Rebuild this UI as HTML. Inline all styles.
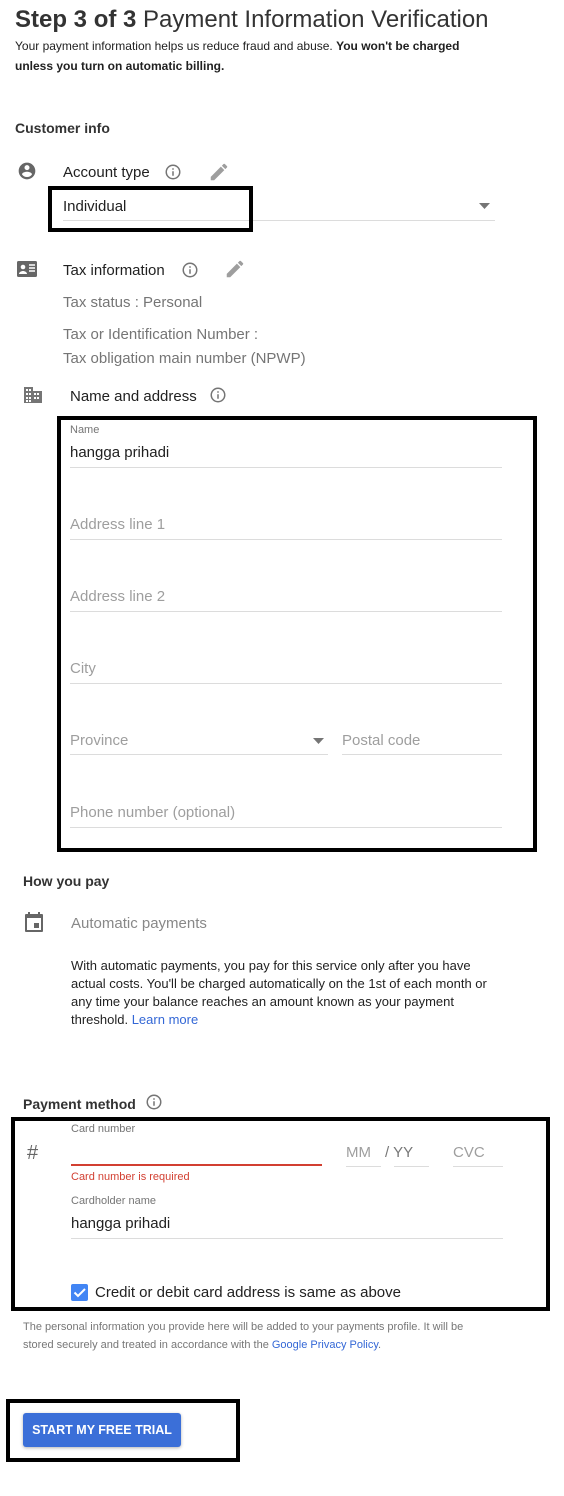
<!DOCTYPE html>
<html><head><meta charset="utf-8"><style>
*{margin:0;padding:0;box-sizing:border-box}
body{width:564px;height:1496px;background:#fff;position:relative;font-family:"Liberation Sans",Arial,sans-serif;color:#212121;overflow:hidden}
.t{position:absolute;white-space:nowrap;line-height:1}
.g{color:#757575}
.ln{position:absolute;height:1px;background:#dcdcdc}
.box{position:absolute;border:4px solid #000}
svg{position:absolute}
.lbl{font-size:15px;color:#9e9e9e}
</style></head><body>
<div class="t" style="left:15px;top:8px;font-size:24px;color:#333"><b style="font-weight:bold">Step 3 of 3</b> Payment Information Verification</div>
<div class="t" style="left:15px;top:40px;font-size:12px">Your payment information helps us reduce fraud and abuse. <b>You won't be charged</b></div>
<div class="t" style="left:15px;top:60px;font-size:12px;font-weight:bold">unless you turn on automatic billing.</div>
<div class="t" style="left:15px;top:121px;font-size:14px;font-weight:bold;color:#333">Customer info</div>

<svg style="left:17px;top:161px" width="20" height="20" viewBox="0 0 24 24"><path fill="#666" d="M12 2C6.5 2 2 6.5 2 12s4.5 10 10 10 10-4.5 10-10S17.5 2 12 2zm0 3a3 3 0 110 6 3 3 0 010-6zm0 14.2a7.2 7.2 0 01-6-3.2c0-2 4-3.1 6-3.1s6 1.1 6 3.1a7.2 7.2 0 01-6 3.2z"/></svg>
<div class="t" style="left:63px;top:165px;font-size:15px">Account type</div>
<svg style="left:164px;top:163px" width="18" height="18" viewBox="0 0 24 24"><circle cx="12" cy="12" r="9" fill="none" stroke="#757575" stroke-width="2"/><path d="M12 11v6M12 7v2" stroke="#757575" stroke-width="2"/></svg>
<svg style="left:208px;top:161px" width="22" height="22" viewBox="0 0 24 24"><path fill="#9e9e9e" d="M3 17.25V21h3.75L17.8 9.94l-3.75-3.75L3 17.25zM20.7 7.04a1 1 0 000-1.41l-2.34-2.34a1 1 0 00-1.41 0l-1.83 1.83 3.75 3.75 1.83-1.83z"/></svg>
<div class="t" style="left:63px;top:199px;font-size:15px">Individual</div>
<div class="ln" style="left:63px;top:220px;width:432px"></div>
<svg style="left:479px;top:202px" width="12" height="8"><path d="M0 1h11L5.5 7z" fill="#757575"/></svg>
<div class="box" style="left:48px;top:186px;width:205px;height:46px"></div>

<svg style="left:16px;top:259px" width="22" height="20" viewBox="0 0 22 20"><rect x="1" y="2" width="20" height="16" rx="1.5" fill="#666"/><circle cx="7" cy="8" r="2.3" fill="#fff"/><path d="M3 15c0-2 2.5-3 4-3s4 1 4 3z" fill="#fff"/><path d="M13 6h6M13 9h6M13 12h6" stroke="#fff" stroke-width="1.5"/></svg>
<div class="t" style="left:63px;top:263px;font-size:15px">Tax information</div>
<svg style="left:181px;top:261px" width="18" height="18" viewBox="0 0 24 24"><circle cx="12" cy="12" r="9" fill="none" stroke="#757575" stroke-width="2"/><path d="M12 11v6M12 7v2" stroke="#757575" stroke-width="2"/></svg>
<svg style="left:224px;top:258px" width="22" height="22" viewBox="0 0 24 24"><path fill="#9e9e9e" d="M3 17.25V21h3.75L17.8 9.94l-3.75-3.75L3 17.25zM20.7 7.04a1 1 0 000-1.41l-2.34-2.34a1 1 0 00-1.41 0l-1.83 1.83 3.75 3.75 1.83-1.83z"/></svg>
<div class="t g" style="left:63px;top:295px;font-size:15px">Tax status : Personal</div>
<div class="t g" style="left:63px;top:327px;font-size:15px">Tax or Identification Number :</div>
<div class="t g" style="left:63px;top:351px;font-size:15px">Tax obligation main number (NPWP)</div>

<svg style="left:23px;top:386px" width="20" height="18" viewBox="0 0 20 18"><path fill="#757575" d="M1 1h9v4h9v12H1z"/><g fill="#fff"><rect x="3" y="3" width="2" height="2"/><rect x="6" y="3" width="2" height="2"/><rect x="3" y="7" width="2" height="2"/><rect x="6" y="7" width="2" height="2"/><rect x="3" y="11" width="2" height="2"/><rect x="6" y="11" width="2" height="2"/><rect x="11" y="7" width="2" height="2"/><rect x="14" y="7" width="2" height="2"/><rect x="11" y="11" width="2" height="2"/><rect x="14" y="11" width="2" height="2"/><rect x="3" y="14" width="2" height="2"/><rect x="6" y="14" width="2" height="2"/></g></svg>
<div class="t" style="left:70px;top:389px;font-size:15px">Name and address</div>
<svg style="left:209px;top:386px" width="18" height="18" viewBox="0 0 24 24"><circle cx="12" cy="12" r="9" fill="none" stroke="#757575" stroke-width="2"/><path d="M12 11v6M12 7v2" stroke="#757575" stroke-width="2"/></svg>

<div class="box" style="left:57px;top:416px;width:480px;height:436px"></div>
<div class="t g" style="left:70px;top:425px;font-size:11px">Name</div>
<div class="t" style="left:70px;top:445px;font-size:15px">hangga prihadi</div>
<div class="ln" style="left:70px;top:467px;width:432px"></div>
<div class="t lbl" style="left:70px;top:517px">Address line 1</div>
<div class="ln" style="left:70px;top:539px;width:432px"></div>
<div class="t lbl" style="left:70px;top:589px">Address line 2</div>
<div class="ln" style="left:70px;top:611px;width:432px"></div>
<div class="t lbl" style="left:70px;top:661px">City</div>
<div class="ln" style="left:70px;top:683px;width:432px"></div>
<div class="t lbl" style="left:70px;top:733px">Province</div>
<svg style="left:313px;top:737px" width="12" height="8"><path d="M0 1h11L5.5 7z" fill="#757575"/></svg>
<div class="ln" style="left:70px;top:754px;width:258px"></div>
<div class="t lbl" style="left:342px;top:733px">Postal code</div>
<div class="ln" style="left:342px;top:754px;width:160px"></div>
<div class="t lbl" style="left:70px;top:805px">Phone number (optional)</div>
<div class="ln" style="left:70px;top:827px;width:432px"></div>

<div class="t" style="left:23px;top:874px;font-size:14px;font-weight:bold;color:#333">How you pay</div>
<svg style="left:24px;top:912px" width="20" height="20" viewBox="0 0 20 20"><path fill="#666" d="M4 0h2v2h8V0h2v2h2a1 1 0 011 1v16a1 1 0 01-1 1H2a1 1 0 01-1-1V3a1 1 0 011-1h2zM3 6v12h14V6z"/><rect x="10" y="11" width="5" height="5" fill="#666"/></svg>
<div class="t" style="left:71px;top:916px;font-size:15px;color:#888">Automatic payments</div>
<div style="position:absolute;left:71px;top:957px;font-size:13px;line-height:18px;color:#222;width:460px">With automatic payments, you pay for this service only after you have<br>actual costs. You'll be charged automatically on the 1st of each month or<br>any time your balance reaches an amount known as your payment<br>threshold. <span style="color:#3367d6">Learn more</span></div>

<div class="t" style="left:23px;top:1097px;font-size:14px;font-weight:bold;color:#333">Payment method</div>
<svg style="left:145px;top:1093px" width="18" height="18" viewBox="0 0 24 24"><circle cx="12" cy="12" r="9" fill="none" stroke="#757575" stroke-width="2"/><path d="M12 11v6M12 7v2" stroke="#757575" stroke-width="2"/></svg>
<div class="box" style="left:11px;top:1117px;width:539px;height:194px"></div>
<div class="t" style="left:27px;top:1143px;font-size:20px;color:#666">#</div>
<div class="t g" style="left:71px;top:1124px;font-size:11px">Card number</div>
<div style="position:absolute;left:71px;top:1164px;width:251px;height:2px;background:#d23f31"></div>
<div class="t" style="left:71px;top:1172px;font-size:11px;color:#d23f31">Card number is required</div>
<div class="t lbl" style="left:346px;top:1145px">MM</div>
<div class="ln" style="left:346px;top:1166px;width:35px"></div>
<div class="t lbl" style="left:385px;top:1145px;color:#777">/ YY</div>
<div class="ln" style="left:394px;top:1166px;width:35px"></div>
<div class="t lbl" style="left:453px;top:1145px">CVC</div>
<div class="ln" style="left:453px;top:1166px;width:50px"></div>
<div class="t g" style="left:71px;top:1196px;font-size:11px">Cardholder name</div>
<div class="t" style="left:71px;top:1216px;font-size:15px">hangga prihadi</div>
<div class="ln" style="left:71px;top:1238px;width:432px"></div>
<div style="position:absolute;left:71px;top:1284px;width:17px;height:17px;background:#4285f4;border-radius:2px"></div>
<svg style="left:71px;top:1284px" width="17" height="17"><path d="M3.5 8.5l3.5 3.5 7-7" stroke="#fff" stroke-width="2" fill="none"/></svg>
<div class="t" style="left:95px;top:1285px;font-size:15px">Credit or debit card address is same as above</div>

<div style="position:absolute;left:23px;top:1318px;font-size:11px;line-height:18px;color:#777">The personal information you provide here will be added to your payments profile. It will be<br>stored securely and treated in accordance with the <span style="color:#3367d6">Google Privacy Policy</span>.</div>

<div class="box" style="left:6px;top:1399px;width:234px;height:63px"></div>
<div style="position:absolute;left:23px;top:1413px;width:158px;height:34px;background:#3b6fd8;border-radius:3px;box-shadow:0 1px 3px rgba(0,0,0,.3);color:#fff;font-size:12.5px;font-weight:bold;text-align:center;line-height:35px">START MY FREE TRIAL</div>
</body></html>
